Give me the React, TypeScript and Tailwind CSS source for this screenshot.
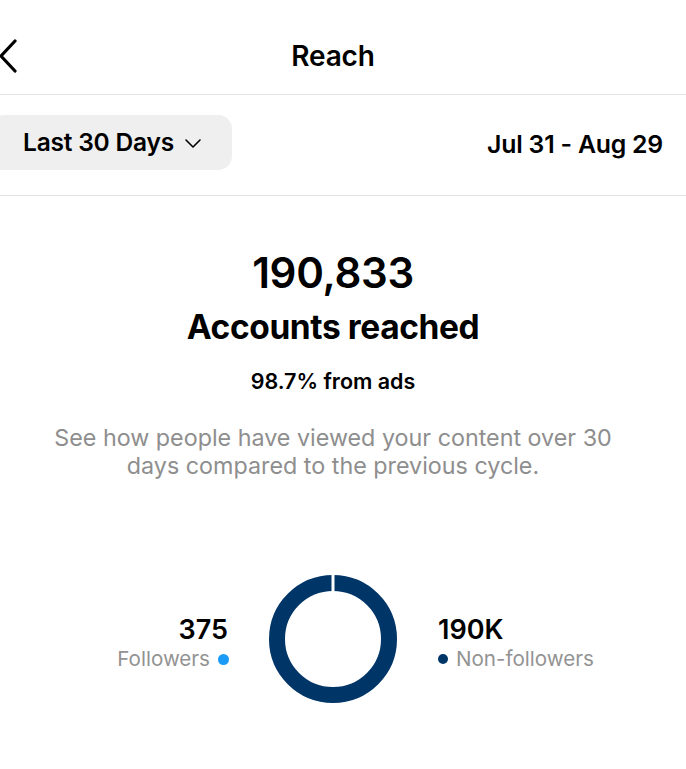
import React from "react";

export default function App() {
  return (
    <div className="w-[686px] h-[769px] bg-white overflow-hidden text-black" style={{ fontFamily: "Inter, 'Liberation Sans', sans-serif" }}>
      {/* Header */}
      <div className="relative h-[95px] border-b border-[#e3e3e3] flex items-center justify-center pr-[20px]">
        <svg className="absolute left-[-2px] top-[38px]" width="22" height="36" viewBox="0 0 22 36" fill="none">
          <path d="M17 3 L3 18 L17 33" stroke="#000" strokeWidth="3.2" strokeLinecap="round" strokeLinejoin="round" />
        </svg>
        <div className="text-[28px] leading-[34px] font-semibold tracking-[-0.2px] mt-[18px]">Reach</div>
      </div>
      {/* Filter row */}
      <div className="h-[101px] border-b border-[#e3e3e3] flex items-center justify-between pr-[23px]">
        <div className="ml-[-10px] h-[55px] w-[242px] rounded-[14px] bg-[#efefef] flex items-center pl-[33px] gap-[10px] mt-[-6px]">
          <span className="text-[24.5px] font-semibold tracking-[-0.2px]">Last 30 Days</span>
          <svg width="18" height="12" viewBox="0 0 18 12" fill="none" className="mt-[1px]">
            <path d="M2 3 L9 10 L16 3" stroke="#000" strokeWidth="1.6" strokeLinecap="round" strokeLinejoin="round" />
          </svg>
        </div>
        <div className="text-[24.8px] font-semibold tracking-[-0.2px]">Jul 31 - Aug 29</div>
      </div>
      {/* Main */}
      <div className="flex flex-col items-center pr-[20px]">
        <div className="mt-[51px] text-[42px] leading-[52px] font-semibold tracking-[-0.3px]">190,833</div>
        <div className="mt-[8px] text-[33.5px] leading-[40px] font-bold tracking-[-0.4px]">Accounts reached</div>
        <div className="mt-[21px] text-[21.5px] leading-[26px] font-semibold">98.7% from ads</div>
        <div className="mt-[30px] w-[600px] text-center text-[23.3px] leading-[28px] text-[#8e8e8e]">
          See how people have viewed your content over 30 days compared to the previous cycle.
        </div>
        {/* Donut row */}
        <div className="mt-[95px] flex items-center">
          <div className="w-[160px] flex flex-col items-end mr-[41px] mt-[8px]">
            <div className="text-[27px] leading-[32px] font-semibold">375</div>
            <div className="flex items-center gap-[8px] text-[20.6px] leading-[26px] text-[#939393]">
              <span>Followers</span>
              <span className="w-[11px] h-[11px] rounded-full bg-[#1a9bf7] mr-[-1px]" />
            </div>
          </div>
          <svg width="128" height="128" viewBox="0 0 128 128">
            <circle cx="64" cy="64" r="56" fill="none" stroke="#003568" strokeWidth="16" />
            <rect x="62.5" y="0" width="3" height="20" fill="#fff" />
          </svg>
          <div className="w-[160px] flex flex-col items-start ml-[41px] mt-[8px]">
            <div className="text-[27px] leading-[32px] font-semibold">190K</div>
            <div className="flex items-center gap-[8px] text-[20.6px] leading-[26px] text-[#939393]">
              <span className="w-[10px] h-[10px] rounded-full bg-[#003568]" />
              <span>Non-followers</span>
            </div>
          </div>
        </div>
      </div>
    </div>
  );
}
